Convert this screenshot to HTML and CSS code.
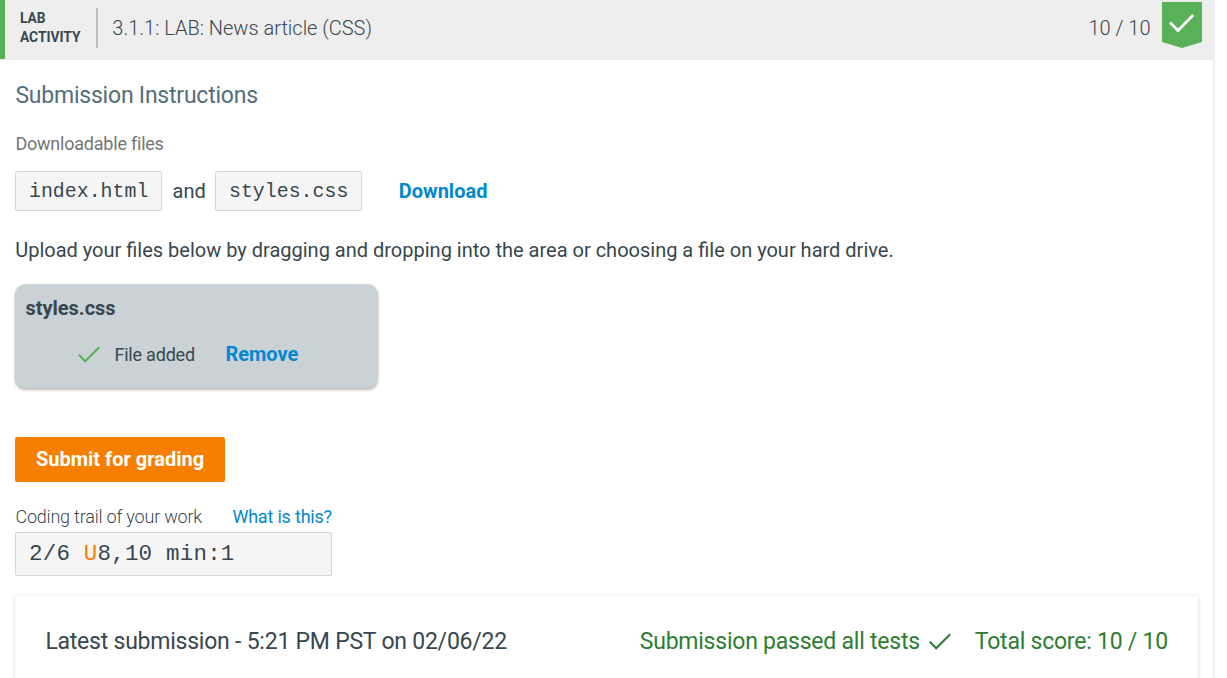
FILE: index.html
```html
<!DOCTYPE html>
<html lang="en">
<head>
<meta charset="utf-8">
<title>3.1.1: LAB: News article (CSS)</title>
<link rel="stylesheet" href="styles.css">
</head>
<body>
<main class="activity">
  <header class="title-bar">
    <div class="kind">LAB<br>ACTIVITY</div>
    <h1 class="title"><span>3.1.1: LAB: News article (CSS)</span></h1>
    <div class="points">10 / 10</div>
    <svg class="ribbon" width="40" height="46" viewBox="0 0 40 46"><path fill="#58b158" d="M0 0H40V40L20 46L0 40Z"/><path fill="none" stroke="#fff" stroke-width="2.8" d="M8 20.5L16 28.5L31.3 13"/></svg>
  </header>
  <section class="content">
    <h2 class="heading"><span>Submission Instructions</span></h2>
    <div class="label"><span>Downloadable files</span></div>
    <div class="files">
      <code class="file">index.html</code>
      <span class="and">and</span>
      <code class="file">styles.css</code>
      <a class="link download">Download</a>
    </div>
    <p class="hint"><span>Upload your files below by dragging and dropping into the area or choosing a file on your hard drive.</span></p>
    <div class="upload">
      <div class="upload-name"><span>styles.css</span></div>
      <div class="upload-status">
        <svg width="22" height="17" viewBox="0 0 22 17"><path fill="none" stroke="#58b158" stroke-width="2.2" d="M.8 8.8L7.2 15.2L21.2 1.2"/></svg>
        <span class="added">File added</span>
        <a class="link remove">Remove</a>
      </div>
    </div>
    <button class="submit"><span>Submit for grading</span></button>
    <div class="trail-head">
      <span class="trail-label">Coding trail of your work</span>
      <a class="what">What is this?</a>
    </div>
    <div class="trail"><span>2/6 <span class="upload-day">U</span>8,10 min:1</span></div>
    <section class="latest">
      <span class="when">Latest submission - 5:21 PM PST on 02/06/22</span>
      <span class="passed">Submission passed all tests</span>
      <svg class="passed-icon" width="22" height="17" viewBox="0 0 22 17"><path fill="none" stroke="#2e7d32" stroke-width="2.2" d="M.8 8.8L7.2 15.2L21.2 1.2"/></svg>
      <span class="total">Total score: 10 / 10</span>
    </section>
  </section>
</main>
</body>
</html>
```
FILE: styles.css
```css
* { box-sizing: border-box; }
body { margin: 0; background: #fff; color: #37474f; font-family: Roboto, "Liberation Sans", sans-serif; font-size: 20px; white-space: nowrap; }
.activity { width: 1215px; height: 678px; border-right: 2px solid #eee; }
.title-bar { display: flex; width: 1215px; height: 60px; background: linear-gradient(#58b158, #58b158) 0 0 / 5px 59px no-repeat #eee; padding-left: 5px; }
.kind { width: 93px; height: 40px; margin-top: 8px; padding: 1px 0 0 15px; border-right: 2px solid #bdbdbd; font-size: 13.75px; font-weight: 700; line-height: 19px; }
.title { margin: 0 auto 0 14.3px; font-size: 20px; font-weight: 300; line-height: 57px; }
.points { margin-right: 11.5px; font-weight: 300; line-height: 57px; }
.ribbon { margin: 2px 13px 0 0; }
.content { padding: 18px 15px 0; }
.heading { margin: 0; padding: 1px 0 0 .4px; color: #546e7a; font-size: 23px; font-weight: 400; letter-spacing: -.22px; line-height: 34px; }
.label { margin-top: 17px; padding-left: .4px; color: #757575; font-size: 18px; letter-spacing: -.22px; line-height: 28px; }
.files { display: flex; align-items: center; margin-top: 13px; height: 40px; }
.file { height: 40px; width: 147px; padding-left: 13px; border: 1px solid #d6d6d6; border-radius: 2px; background: #f5f5f5; font: 19.9px/39px "Courier New", "Liberation Mono", monospace; }
.and { width: 53px; padding-left: 10.5px; }
.link { color: #0288d1; font-weight: 700; }
.download { margin-left: 36.7px; }
.hint { margin: 24px 0 0; padding-left: .2px; line-height: 30px; }
.upload { width: 363px; height: 104px; margin-top: 19px; padding: 9px 10.4px 0; border-radius: 10px; background: #cbd2d5; box-shadow: 0 2px 3px rgba(0, 0, 0, .28); }
.upload-name { font-weight: 700; line-height: 30px; }
.upload-status { display: flex; align-items: center; height: 30px; margin-top: 16px; padding-left: 53px; }
.added { width: 111px; margin-left: 14px; font-size: 18px; letter-spacing: -.2px; }
.submit { display: block; width: 210px; height: 45px; margin-top: 49px; padding: 0; border: 0; border-radius: 2px; background: #f77f00; color: #fff; font: 700 20px/45px Roboto, sans-serif; }
.trail-head { display: flex; height: 30px; margin-top: 20px; padding-left: .4px; font-size: 18px; letter-spacing: -.2px; line-height: 30px; }
.trail-label { width: 217px; font-weight: 300; }
.what { color: #0288d1; }
.trail { width: 317px; height: 44px; padding-left: 13px; border: 1px solid #d6d6d6; border-radius: 2px; background: #f5f5f5; font: 22.5px/43px "Courier New", "Liberation Mono", monospace; letter-spacing: .2px; }
.upload-day { color: #f57c00; }
.latest { display: flex; align-items: center; width: 1183px; height: 82px; margin-top: 20px; padding: 8px 30px 0; box-shadow: 0 1px 4px rgba(0, 0, 0, .18); font-size: 23px; letter-spacing: -.23px; }
.when { margin-right: auto; padding-left: .4px; }
.passed, .total { color: #2e7d32; }
.passed-icon { margin: 0 24px 0 9px; }
```
